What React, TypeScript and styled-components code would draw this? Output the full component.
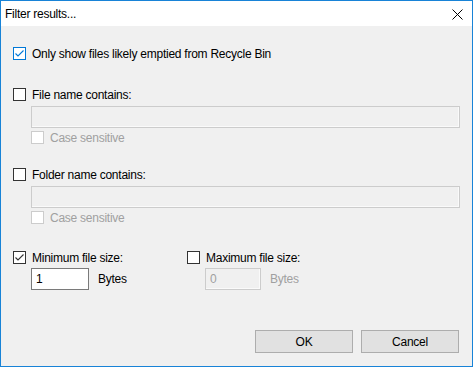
import React from "react";
import styled, { createGlobalStyle } from "styled-components";

const Global = createGlobalStyle`
  html, body { margin: 0; padding: 0; background: #f0f0f0; }
  body { font-family: "Liberation Sans", Arial, sans-serif; font-size: 12px; letter-spacing: -0.25px; color: #000; }
`;

const Window = styled.div`
  box-sizing: border-box;
  width: 473px;
  height: 367px;
  border: 1px solid #1883d7;
  background: #f0f0f0;
  display: flex;
  flex-direction: column;
`;

const TitleBar = styled.div`
  height: 25px;
  background: #fff;
  display: flex;
  align-items: center;
  justify-content: space-between;
  padding: 0 9px 0 4px;
  flex-shrink: 0;
`;

const Title = styled.span`
  font-size: 12px;
  line-height: 15px;
  margin-top: 1px;
`;

const CloseIcon = styled.svg`
  width: 11px;
  height: 11px;
  display: block;
  margin-top: 2px;
`;

const Body = styled.div`
  flex: 1;
  display: flex;
  flex-direction: column;
  padding: 0 12px 13px 12px;
`;

const Row = styled.label<{ $top: number; $disabled?: boolean }>`
  display: flex;
  align-items: center;
  gap: 6px;
  height: 15px;
  margin-top: ${(p) => p.$top}px;
  color: ${(p) => (p.$disabled ? "#a0a0a0" : "#000")};
  white-space: nowrap;
`;

const Indented = styled.div<{ $top: number }>`
  margin-left: 18px;
  margin-top: ${(p) => p.$top}px;
`;

const Box = styled.span<{ $tone: "normal" | "blue" | "disabled" }>`
  box-sizing: border-box;
  width: 13px;
  height: 13px;
  flex-shrink: 0;
  display: flex;
  align-items: center;
  justify-content: center;
  background: #fff;
  border: 1px solid
    ${(p) => (p.$tone === "blue" ? "#0078d7" : p.$tone === "disabled" ? "#cccccc" : "#333333")};
`;

const TextField = styled.div<{ $disabled?: boolean; $width?: number }>`
  box-sizing: border-box;
  height: 22px;
  width: ${(p) => (p.$width ? `${p.$width}px` : "auto")};
  border: 1px solid ${(p) => (p.$disabled ? "#cccccc" : "#7a7a7a")};
  background: ${(p) => (p.$disabled ? "#f0f0f0" : "#fff")};
  box-shadow: ${(p) => (p.$disabled ? "inset -1px -1px 0 #fafafa" : "none")};
  color: ${(p) => (p.$disabled ? "#a0a0a0" : "#000")};
  padding: 0 4px;
  line-height: 20px;
  flex-shrink: 0;
`;

const SizeGrid = styled.div`
  display: grid;
  grid-template-columns: 174px auto;
  margin-top: 25px;
`;

const SizeCol = styled.div`
  display: flex;
  flex-direction: column;
`;

const SizeInputRow = styled.div<{ $disabled?: boolean }>`
  display: flex;
  align-items: center;
  gap: 9px;
  margin-top: 3px;
  margin-left: 18px;
  color: ${(p) => (p.$disabled ? "#a0a0a0" : "#000")};
`;

const Buttons = styled.div`
  margin-top: auto;
  display: flex;
  justify-content: flex-end;
  gap: 8px;
  padding-right: 1px;
`;

const Button = styled.button`
  box-sizing: border-box;
  width: 98px;
  height: 23px;
  background: #e1e1e1;
  border: 1px solid #adadad;
  font-family: "Liberation Sans", Arial, sans-serif;
  font-size: 12px;
  letter-spacing: -0.25px;
  color: #000;
  padding: 0;
`;

type Tone = "normal" | "blue" | "disabled";

function Check({ checked, tone }: { checked?: boolean; tone: Tone }) {
  const c = tone === "blue" ? "#0078d7" : "#333333";
  return (
    <Box $tone={tone}>
      {checked && (
        <svg width="11" height="11" viewBox="0 0 11 11">
          <path d="M1.5 5.5 L4 8 L9.5 2.5" fill="none" stroke={c} strokeWidth="1.1" />
        </svg>
      )}
    </Box>
  );
}

export default function App() {
  return (
    <>
      <Global />
      <Window>
        <TitleBar>
          <Title>Filter results...</Title>
          <CloseIcon viewBox="0 0 11 11">
            <path d="M0.5 0.5 L10.5 10.5 M10.5 0.5 L0.5 10.5" stroke="#000" strokeWidth="1" fill="none" />
          </CloseIcon>
        </TitleBar>
        <Body>
          <Row $top={20}>
            <Check checked tone="blue" />
            Only show files likely emptied from Recycle Bin
          </Row>

          <Row $top={26}>
            <Check tone="normal" />
            File name contains:
          </Row>
          <Indented $top={4}>
            <TextField $disabled />
          </Indented>
          <Indented $top={2}>
            <Row $top={0} $disabled>
              <Check tone="disabled" />
              Case sensitive
            </Row>
          </Indented>

          <Row $top={22}>
            <Check tone="normal" />
            Folder name contains:
          </Row>
          <Indented $top={4}>
            <TextField $disabled />
          </Indented>
          <Indented $top={2}>
            <Row $top={0} $disabled>
              <Check tone="disabled" />
              Case sensitive
            </Row>
          </Indented>

          <SizeGrid>
            <SizeCol>
              <Row $top={0}>
                <Check checked tone="normal" />
                Minimum file size:
              </Row>
              <SizeInputRow>
                <TextField $width={58}>1</TextField>
                Bytes
              </SizeInputRow>
            </SizeCol>
            <SizeCol>
              <Row $top={0}>
                <Check tone="normal" />
                Maximum file size:
              </Row>
              <SizeInputRow $disabled>
                <TextField $disabled $width={56}>0</TextField>
                Bytes
              </SizeInputRow>
            </SizeCol>
          </SizeGrid>

          <Buttons>
            <Button>OK</Button>
            <Button>Cancel</Button>
          </Buttons>
        </Body>
      </Window>
    </>
  );
}
